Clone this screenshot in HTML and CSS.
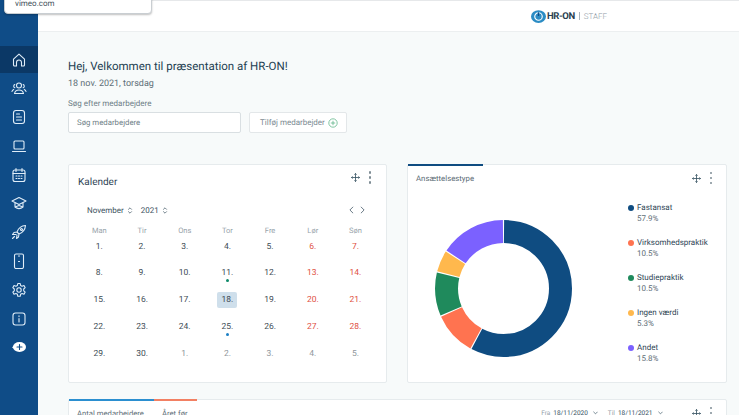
FILE: index.html
```html
<!DOCTYPE html>
<html lang="en">
<head>
    <meta charset="UTF-8">
    <title>HR-ON Staff</title>
    <link rel="stylesheet" href="styles.css">
</head>
<body>
    <div class="url-tip">vimeo.com</div>
    <div class="app">
        <nav class="sidebar">
            <a class="nav-item active"><svg viewBox="0 0 16 16"><path d="M2.5 13V7.2L8 2.2l5.5 5V13a1 1 0 0 1-1 1H10.500V10.500a2.500 2.500 0 0 0-5 0V14H3.500a1 1 0 0 1-1-1z"/></svg></a>
            <a class="nav-item"><svg viewBox="0 0 16 16"><circle cx="8" cy="5.500" r="2.500"/><path d="M3.500 13.500c.5-2.500 2.300-3.500 4.500-3.500s4 1 4.500 3.500zM3.800 7.800a1.800 1.800 0 0 1 0-3.300M12.200 7.800a1.800 1.800 0 0 0 0-3.300M1 11.500c.2-1 .8-1.700 1.700-2.100M15 11.500c-.2-1-.8-1.700-1.700-2.100"/></svg></a>
            <a class="nav-item"><svg viewBox="0 0 16 16"><rect x="2.500" y="1.500" width="11" height="13" rx="2.500"/><path d="M5.500 5h3M5.500 8h5M5.500 11h5"/></svg></a>
            <a class="nav-item"><svg viewBox="0 0 16 16"><rect x="3" y="3" width="10" height="8" rx="1"/><path d="M1.500 13.500h13"/></svg></a>
            <a class="nav-item"><svg viewBox="0 0 16 16"><rect x="2" y="3" width="12" height="11.500" rx="2"/><path d="M2 6.500h12M5 1.500v3M11 1.500v3M5 9h1M7.500 9h1M10 9h1M5 11.500h1M7.500 11.500h1M10 11.500h1"/></svg></a>
            <a class="nav-item"><svg viewBox="0 0 16 16"><path d="M8 2.500L15 6 8 9.500 1 6zM4 8v4c2.500 2 5.500 2 8 0V8M4 12l4-1.500 4 1.500"/></svg></a>
            <a class="nav-item"><svg viewBox="0 0 16 16"><path d="M14.500 1.500c-4 .3-7 2.500-8.500 6.500l2 2c4-1.500 6.200-4.500 6.500-8.500zM6 8l-3 .5-1.500 2L5 10.500M8 10l-.5 3-2 1.500.5-3.500M3.500 12.500L1.500 14.500"/><circle cx="10.500" cy="5.500" r="1"/></svg></a>
            <a class="nav-item"><svg viewBox="0 0 16 16"><rect x="3.500" y="1" width="9" height="14.500" rx="1.500"/><path d="M7.500 3h1M7.500 8.500h1"/></svg></a>
            <a class="nav-item"><svg viewBox="0 0 16 16"><path d="M6.800 1.500h2.400l.4 2 1.500.8 1.900-.7 1.200 2.100-1.500 1.300v1.800l1.500 1.300-1.200 2.100-1.900-.7-1.500.8-.4 2H6.800l-.4-2-1.500-.8-1.900.7-1.200-2.100 1.500-1.300V7.000L1.800 5.700 3 3.600l1.900.7 1.500-.8z"/><circle cx="8" cy="8" r="2.200"/></svg></a>
            <a class="nav-item"><svg viewBox="0 0 16 16"><rect x="2" y="2" width="12" height="12" rx="2.500"/><path d="M8 4.800v.8M8 7.500v3.500"/></svg></a>
            <a class="nav-item"><svg viewBox="0 0 16 16" class="nav-add"><ellipse cx="8.500" cy="8" rx="6.500" ry="5" fill="#fff" stroke="none"/><path d="M1 8.500L3 6.500v3z" fill="#fff" stroke="none"/><path d="M8.500 5.500v5M6 8h5" stroke="#0f4c87"/></svg></a>
        </nav>

        <div class="page">
            <header class="topbar">
                <div class="logo">
                    <svg viewBox="0 0 16 16" class="logo-mark"><ellipse cx="8" cy="8" rx="8" ry="6.800" fill="#2b8cc4"/><circle cx="8" cy="8" r="4" fill="none" stroke="#fff" stroke-width="1.200"/><path d="M8 3.500v4" stroke="#0f4c87" stroke-width="1.400"/></svg>
                    <span class="logo-name">HR-ON</span>
                    <span class="logo-sep"></span>
                    <span class="logo-staff">STAFF</span>
                </div>
            </header>

            <main class="content">
                <h1 class="welcome">Hej, Velkommen til præsentation af HR-ON!</h1>
                <p class="today">18 nov. 2021, torsdag</p>
                <label class="search-label">Søg efter medarbejdere</label>
                <div class="search-row">
                    <div class="search-box">Søg medarbejdere</div>
                    <div class="add-btn">Tilføj medarbejder
                        <svg viewBox="0 0 10 10" class="add-icon"><circle cx="5" cy="5" r="4.200"/><path d="M5 2.800v4.400M2.800 5h4.400"/></svg>
                    </div>
                </div>

                <div class="cards">
                    <section class="card calendar">
                        <div class="card-head">
                            <h2 class="card-title">Kalender</h2>
                            <div class="card-tools">
                                <svg viewBox="0 0 10 10" class="move-icon"><path d="M5 .5v9M.5 5h9M3.800 1.800L5 .5l1.200 1.300M3.800 8.200L5 9.500l1.200-1.300M1.800 3.800L.5 5l1.300 1.200M8.200 3.800L9.500 5 8.200 6.200"/></svg>
                                <div class="dots"><i></i><i></i><i></i></div>
                            </div>
                        </div>
                        <div class="cal-nav">
                            <span class="cal-select cal-month">November <svg viewBox="0 0 6 10" class="updown"><path d="M1 4l2-2 2 2M1 6l2 2 2-2"/></svg></span>
                            <span class="cal-select">2021 <svg viewBox="0 0 6 10" class="updown"><path d="M1 4l2-2 2 2M1 6l2 2 2-2"/></svg></span>
                            <span class="cal-arrows">
                                <svg viewBox="0 0 6 10"><path d="M5 1L1 5l4 4"/></svg>
                                <svg viewBox="0 0 6 10"><path d="M1 1l4 4-4 4"/></svg>
                            </span>
                        </div>
                        <div class="cal-days">
                            <span>Man</span><span>Tir</span><span>Ons</span><span>Tor</span><span>Fre</span><span>Lør</span><span>Søn</span>
                        </div>
                        <div class="cal-grid">
                            <span>1.</span><span>2.</span><span>3.</span><span>4.</span><span>5.</span><span class="wk">6.</span><span class="wk">7.</span>
                            <span>8.</span><span>9.</span><span>10.</span><span class="ev-green">11.</span><span>12.</span><span class="wk">13.</span><span class="wk">14.</span>
                            <span>15.</span><span>16.</span><span>17.</span><span class="now">18.</span><span>19.</span><span class="wk">20.</span><span class="wk">21.</span>
                            <span>22.</span><span>23.</span><span>24.</span><span class="ev-blue">25.</span><span>26.</span><span class="wk">27.</span><span class="wk">28.</span>
                            <span>29.</span><span>30.</span><span class="off">1.</span><span class="off">2.</span><span class="off">3.</span><span class="off">4.</span><span class="off">5.</span>
                        </div>
                    </section>

                    <section class="card employment">
                        <div class="tab-line"><i class="tab-blue"></i></div>
                        <div class="card-head small">
                            <h2 class="card-sub">Ansættelsestype</h2>
                            <div class="card-tools">
                                <svg viewBox="0 0 10 10" class="move-icon"><path d="M5 .5v9M.5 5h9M3.800 1.800L5 .5l1.200 1.300M3.800 8.200L5 9.500l1.200-1.300M1.800 3.800L.5 5l1.300 1.200M8.200 3.800L9.500 5 8.200 6.200"/></svg>
                                <div class="dots"><i></i><i></i><i></i></div>
                            </div>
                        </div>
                        <div class="chart-row">
                            <svg viewBox="0 0 137 137" class="donut">
                                <g fill="none" stroke-width="23" transform="rotate(-90 68.500 68.500)">
                                    <circle cx="68.500" cy="68.500" r="57" pathLength="100" stroke="#0f4c81" stroke-dasharray="57.600 42.400" stroke-dashoffset="-.15"/>
                                    <circle cx="68.500" cy="68.500" r="57" pathLength="100" stroke="#ff7350" stroke-dasharray="10.200 89.800" stroke-dashoffset="-58.050"/>
                                    <circle cx="68.500" cy="68.500" r="57" pathLength="100" stroke="#1f8a5c" stroke-dasharray="10.200 89.800" stroke-dashoffset="-68.550"/>
                                    <circle cx="68.500" cy="68.500" r="57" pathLength="100" stroke="#ffb84d" stroke-dasharray="5 95" stroke-dashoffset="-79.050"/>
                                    <circle cx="68.500" cy="68.500" r="57" pathLength="100" stroke="#7b61ff" stroke-dasharray="15.500 84.500" stroke-dashoffset="-84.350"/>
                                </g>
                            </svg>
                            <ul class="legend">
                                <li class="legend-item"><i class="swatch c-navy"></i>Fastansat<small>57.9%</small></li>
                                <li class="legend-item"><i class="swatch c-orange"></i>Virksomhedspraktik<small>10.5%</small></li>
                                <li class="legend-item"><i class="swatch c-green"></i>Studiepraktik<small>10.5%</small></li>
                                <li class="legend-item"><i class="swatch c-yellow"></i>Ingen værdi<small>5.3%</small></li>
                                <li class="legend-item"><i class="swatch c-purple"></i>Andet<small>15.8%</small></li>
                            </ul>
                        </div>
                    </section>
                </div>

                <section class="card employees">
                    <div class="tab-line"><i class="tab-wide"></i><i class="tab-orange"></i></div>
                    <div class="emp-head">
                        <span class="emp-tab">Antal medarbejdere</span>
                        <span class="emp-tab">Året før</span>
                        <span class="emp-range"><em>Fra</em> 18/11/2020 <svg viewBox="0 0 6 4" class="chev"><path d="M.5.5L3 3 5.500.5"/></svg></span>
                        <span class="emp-range"><em>Til</em> 18/11/2021 <svg viewBox="0 0 6 4" class="chev"><path d="M.5.5L3 3 5.500.5"/></svg></span>
                        <div class="card-tools">
                            <svg viewBox="0 0 10 10" class="move-icon"><path d="M5 .5v9M.5 5h9M3.800 1.800L5 .5l1.200 1.300M3.800 8.200L5 9.500l1.200-1.300M1.800 3.800L.5 5l1.300 1.200M8.200 3.800L9.500 5 8.200 6.200"/></svg>
                            <div class="dots"><i></i><i></i><i></i></div>
                        </div>
                    </div>
                </section>
            </main>
        </div>
    </div>
</body>
</html>
```

FILE: styles.css
```css
*{
    margin    : 0;
    padding   : 0;
    box-sizing: border-box;
}

html, body{
    height  : 100%;
    overflow: hidden;
}

body{
    font-family   : Roboto, "Liberation Sans", sans-serif;
    color         : #2f4656;
    background    : #f7fafa;
    text-rendering: geometricPrecision;
}

svg{
    display: block;
}

.app{
    display: flex;
    height : 100vh;
}

/* browser link tooltip over the corner */
.url-tip{
    position     : absolute;
    top          : -8px;
    left         : 4px;
    width        : 148px;
    height       : 22px;
    padding      : 6px 0 0 10px;
    font-size    : 8px;
    line-height  : 9px;
    color        : #44525c;
    background   : #fff;
    border       : 1px solid #c9ced2;
    border-radius: 4px;
    box-shadow   : 0 1px 2px rgba(0, 0, 0, 0.25);
}

.sidebar{
    flex       : 0 0 38px;
    padding-top: 46px;
    background : #0f4c87;
}

.nav-item{
    display        : flex;
    justify-content: center;
    align-items    : center;
    height         : 28.800px;
}

.nav-item.active{
    height       : 27px;
    margin-bottom: .800px;
    background   : #0b3866;
}

.nav-item svg{
    width          : 16px;
    height         : 16px;
    fill           : none;
    stroke         : #e0edf8;
    stroke-width   : 1.100;
    stroke-linecap : round;
    stroke-linejoin: round;
}

.page{
    flex          : 1;
    min-width     : 0;
    display       : flex;
    flex-direction: column;
}

.topbar{
    flex         : 0 0 32px;
    display      : flex;
    align-items  : center;
    padding-left : 493px;
    background   : #fff;
    border-top   : 1px solid #e6e8ea;
    border-bottom: 1px solid #eceff0;
}

.logo{
    display    : flex;
    align-items: center;
}

.logo-mark{
    width       : 15px;
    height      : 15px;
    margin-right: 1px;
}

.logo-name{
    font-size     : 9.500px;
    font-weight   : 700;
    letter-spacing: -.4px;
    color         : #28404f;
}

.logo-sep{
    width     : 1px;
    height    : 8px;
    margin    : 0 4px;
    background: #a9b5bd;
}

.logo-staff{
    font-size  : 8px;
    font-weight: 300;
    color      : #8f9da6;
}

.content{
    flex    : 1;
    padding : 25px 12px 0 30px;
    overflow: hidden;
}

.welcome{
    font-size  : 11.500px;
    font-weight: 400;
    line-height: 18px;
    color      : #243f52;
}

.today{
    margin-top : 2px;
    font-size  : 9px;
    line-height: 14px;
    color      : #5f7078;
}

.search-label{
    display    : block;
    margin-top : 7px;
    font-size  : 8px;
    line-height: 12px;
    color      : #6f7f88;
}

.search-row{
    display   : flex;
    gap       : 8px;
    margin-top: 2px;
}

.search-box{
    width        : 173px;
    height       : 21px;
    padding-left : 8px;
    font-size    : 7.800px;
    line-height  : 20px;
    color        : #6f7f88;
    background   : #fff;
    border       : 1px solid #d9dfe2;
    border-radius: 2px;
}

.add-btn{
    display      : flex;
    align-items  : center;
    gap          : 3px;
    width        : 98px;
    height       : 21px;
    padding-left : 10px;
    font-size    : 8px;
    color        : #7d8b93;
    background   : #fff;
    border       : 1px solid #e3e7e9;
    border-radius: 2px;
}

.add-icon{
    width       : 10px;
    height      : 10px;
    fill        : none;
    stroke      : #4fae7c;
    stroke-width: .7;
}

.cards{
    display   : flex;
    gap       : 20px;
    margin-top: 31px;
}

.card{
    background   : #fff;
    border       : 1px solid #e6ebed;
    border-radius: 2px;
}

.calendar{
    width  : 319px;
    height : 219px;
    padding: 0 9px;
}

.employment{
    width : 320px;
    height: 219px;
}

.card-head{
    display        : flex;
    justify-content: space-between;
    align-items    : center;
    height         : 32px;
}

.card-head.small{
    height : 26px;
    padding: 0 8px;
}

.card-title{
    padding-top: 2px;
    font-size  : 10px;
    font-weight: 400;
    color      : #2f4656;
}

.calendar .card-tools{
    margin-top: -7px;
}

.card-sub{
    font-size  : 7.800px;
    font-weight: 400;
    color      : #5d6d76;
}

.card-tools{
    display     : flex;
    align-items : center;
    gap         : 9px;
    margin-right: 6px;
}

.move-icon{
    width       : 9px;
    height      : 9px;
    fill        : none;
    stroke      : #34505f;
    stroke-width: .9;
}

.dots{
    display       : flex;
    flex-direction: column;
    gap           : 2.500px;
}

.dots i{
    width        : 2.500px;
    height       : 2.500px;
    border-radius: 50%;
    background   : #7e8c94;
}

.cal-nav{
    display    : flex;
    align-items: center;
    gap        : 8px;
    margin-top : 6px;
    padding    : 0 9px;
    height     : 14px;
}

.cal-select{
    display    : flex;
    align-items: center;
    gap        : 3px;
    font-size  : 8px;
    color      : #3d5361;
}

.updown{
    width       : 6px;
    height      : 9px;
    fill        : none;
    stroke      : #3d5361;
    stroke-width: .8;
}

.cal-arrows{
    display     : flex;
    gap         : 6px;
    margin-left : auto;
    margin-right: 3px;
}

.cal-arrows svg{
    width       : 5px;
    height      : 8px;
    fill        : none;
    stroke      : #2f4656;
    stroke-width: .9;
}

.cal-days, .cal-grid{
    display              : grid;
    grid-template-columns: repeat(7, 42.700px);
    text-align           : center;
}

.cal-days{
    margin-top : 9px;
    font-size  : 7.500px;
    line-height: 10px;
    color      : #97a3aa;
}

.cal-grid{
    grid-template-rows: 25.500px 27.500px 26.500px 27.500px 26px;
    margin-top        : 3px;
    font-size         : 8.500px;
    line-height       : 16px;
    color             : #3e4c55;
}

.cal-grid span{
    position: relative;
}

.cal-grid .wk{
    color: #e0503f;
}

.cal-grid .off{
    color: #8f979c;
}

.cal-grid .now{
    justify-self : center;
    width        : 20px;
    height       : 16px;
    border-radius: 2px;
    background   : #cfdfeb;
}

.ev-green::after, .ev-blue::after{
    content      : "";
    position     : absolute;
    top          : 14px;
    left         : 50%;
    width        : 3.500px;
    height       : 3.500px;
    margin-left  : -1.750px;
    border-radius: 50%;
}

.ev-green::after{
    background: #0e8a6a;
}

.ev-blue::after{
    background: #1b7fc4;
}

.tab-line{
    display: flex;
    height : 0;
}

.tab-line i{
    display   : block;
    height    : 2px;
    margin-top: -1px;
}

.tab-blue{
    width     : 75px;
    background: #0f4c81;
}

.tab-wide{
    width     : 85px;
    background: #2b8fd0;
}

.tab-orange{
    width     : 43px;
    background: #f28063;
}

.chart-row{
    display    : flex;
    align-items: flex-start;
}

.donut{
    flex  : 0 0 137px;
    width : 137px;
    height: 137px;
    margin: 29px 0 0 27px;
}

.legend{
    list-style : none;
    margin-left: 57px;
    margin-top : 11px;
}

.legend-item{
    position    : relative;
    height      : 35px;
    padding-left: 8px;
    font-size   : 8px;
    line-height : 11px;
    color       : #2f4656;
}

.legend-item small{
    display  : block;
    font-size: 8px;
    color    : #5d6d76;
}

.swatch{
    position     : absolute;
    top          : 3px;
    left         : -1px;
    width        : 6px;
    height       : 6px;
    border-radius: 50%;
}

.c-navy{ background: #0f4c81; }
.c-orange{ background: #ff7350; }
.c-green{ background: #1f8a5c; }
.c-yellow{ background: #ffb84d; }
.c-purple{ background: #7b61ff; }

.employees{
    width     : 659px;
    height    : 60px;
    margin-top: 16px;
}

.emp-head{
    display    : flex;
    align-items: center;
    height     : 26px;
    padding    : 0 8px;
    font-size  : 7.700px;
    color      : #5d6d76;
}

.emp-tab{
    margin-right: 18px;
}

.emp-tab:nth-child(2){
    margin-right: auto;
}

.emp-range{
    display     : flex;
    align-items : center;
    gap         : 3px;
    margin-right: 12px;
    font-size   : 6.500px;
    color       : #34505f;
}

.emp-tab + .emp-range{
    margin-right: 10px;
}

.emp-range em{
    font-style: normal;
    color     : #93a0a8;
}

.emp-head .card-tools{
    margin-left: 17px;
}

.chev{
    width       : 5px;
    height      : 4px;
    margin-left : 2px;
    fill        : none;
    stroke      : #34505f;
    stroke-width: .8;
}
```
